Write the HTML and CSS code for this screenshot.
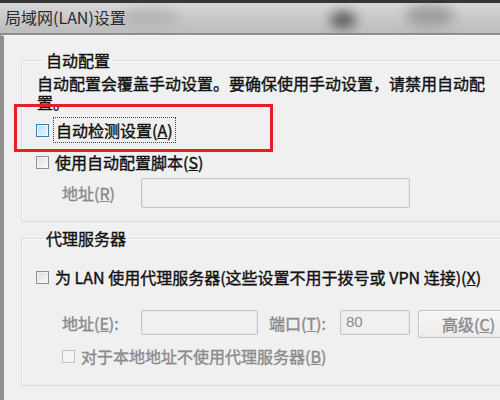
FILE: index.html
```html
<!DOCTYPE html>
<html lang="zh-CN">
<head>
  <meta charset="UTF-8" />
  <title>局域网(LAN)设置</title>
  <link rel="stylesheet" href="styles.css">
</head>
<body>

  <div class="window">
    <div class="titlebar">
      <span class="title">局域网(LAN)设置</span>
      <span class="smudge smudge-1"></span>
      <span class="smudge smudge-2"></span>
      <span class="smudge smudge-3"></span>
    </div>

    <div class="dialog">
      <!-- 自动配置 -->
      <fieldset class="group group-auto">
        <legend>自动配置</legend>
        <p class="desc">自动配置会覆盖手动设置。要确保使用手动设置，请禁用自动配置。</p>

        <div class="check-row row-detect">
          <span class="box box-hot"></span>
          <span class="label focused">自动检测设置(<u>A</u>)</span>
        </div>

        <div class="check-row row-script">
          <span class="box"></span>
          <span class="label">使用自动配置脚本(<u>S</u>)</span>
        </div>

        <div class="field-row row-script-addr">
          <span class="field-label muted">地址(<u>R</u>)</span>
          <span class="input input-wide"></span>
        </div>
      </fieldset>

      <!-- 代理服务器 -->
      <fieldset class="group group-proxy">
        <legend>代理服务器</legend>

        <div class="check-row row-proxy">
          <span class="box"></span>
          <span class="label">为 LAN 使用代理服务器(这些设置不用于拨号或 VPN 连接)(<u>X</u>)</span>
        </div>

        <div class="field-row row-proxy-addr">
          <span class="field-label muted">地址(<u>E</u>):</span>
          <span class="input input-addr"></span>
          <span class="port-label muted">端口(<u>T</u>):</span>
          <span class="input input-port">80</span>
          <span class="btn">高级(<u>C</u>)</span>
        </div>

        <div class="check-row row-bypass">
          <span class="box box-off"></span>
          <span class="label muted">对于本地地址不使用代理服务器(<u>B</u>)</span>
        </div>
      </fieldset>
    </div>

    <div class="highlight"></div>
  </div>

</body>
</html>
```

FILE: styles.css
```css
body {
  margin: 0;
  background-color: #f0f0f0;
  overflow: hidden;
  font-family: "Noto Sans CJK SC", "Liberation Sans", sans-serif;
  color: #111;
}

.window {
  position: relative;
  width: 500px;
  height: 400px;
  background-color: #f0f0f0;
  overflow: hidden;
}

.titlebar {
  position: relative;
  height: 30px;
  border-top: 3px solid #363636;
  border-bottom: 2px solid #8c8c8c;
  background: linear-gradient(to bottom, #d8d8d8, #c6c6c6 60%, #bdbdbd);
  overflow: hidden;
}

.title {
  position: relative;
  display: block;
  padding-left: 5px;
  line-height: 28px;
  font-size: 16px;
  color: #2a2a2a;
  z-index: 1;
}

.smudge {
  position: absolute;
  border-radius: 50%;
  filter: blur(6px);
}

.smudge-1 { left: 120px; top: 6px; width: 60px; height: 18px; background: #b4b4b4; }
.smudge-2 { left: 330px; top: 8px; width: 26px; height: 18px; background: #5e5e5e; }
.smudge-3 { left: 405px; top: 2px; width: 50px; height: 22px; background: #9e9e9e; }

.dialog {
  border-left: 4px solid #8f8f8f;
  border-top: 1px solid #fafafa;
  padding: 14px 0 0 17px;
  height: 360px;
  -webkit-text-stroke: 0.4px currentColor;
}

.group {
  box-sizing: border-box;
  margin: 0;
  padding: 0 0 0 14px;
  width: 479px;
  min-width: 0;
  border: 1px solid #d5dfe5;
  border-right: 0;
  border-radius: 3px 0 0 3px;
  box-shadow: inset 1px 1px 0 #fbfbfb;
}

.group legend {
  margin-left: 8px;
  padding: 0 2px;
  font-size: 16px;
  line-height: 20px;
}

.group-auto {
  padding-top: 4px;
  padding-bottom: 13px;
}

.group-proxy {
  margin-top: 6px;
  padding-top: 19px;
  padding-bottom: 19px;
}

.desc {
  margin: 0;
  padding-left: 1px;
  width: 462px;
  font-size: 16px;
  line-height: 19px;
}

.check-row {
  display: flex;
  align-items: center;
  height: 20px;
  font-size: 16px;
}

.row-detect { margin-top: 8px; }
.row-script { margin-top: 12px; }
.row-bypass { margin-top: 8px; padding-left: 26px; }

.box {
  width: 11px;
  height: 11px;
  border: 1px solid #8e8f8f;
  background: linear-gradient(135deg, #dcdcdc, #fbfbfb);
  box-shadow: inset 0 0 0 1px #f4f4f4;
  flex-shrink: 0;
}

.box-hot {
  border-color: #3c7fb1;
  background: linear-gradient(135deg, #b9dcf7, #eaf6fd);
}

.box-off {
  border-color: #c2c2c2;
  background: #f4f4f4;
}

.label {
  margin-left: 6px;
  white-space: nowrap;
}

.focused {
  margin-left: 4px;
  padding: 0 2px;
  border: 1px dotted #444;
}

.muted {
  color: #8b8b8b;
}

.field-row {
  display: flex;
  align-items: center;
  padding-left: 26px;
  font-size: 16px;
  white-space: nowrap;
}

.row-script-addr { margin-top: 6px; }
.row-proxy-addr { margin-top: 20px; }

.field-label {
  width: 79px;
  flex-shrink: 0;
}

.port-label {
  margin-left: 11px;
  width: 71px;
  flex-shrink: 0;
}

.input {
  box-sizing: border-box;
  height: 25px;
  border: 1px solid #c6c6c6;
  border-radius: 2px;
  background-color: #f0f0f0;
  box-shadow: inset 0 0 0 1px #e8e8e8;
  flex-shrink: 0;
}

.input-wide {
  width: 269px;
  height: 30px;
}

.input-addr { width: 117px; }

.input-port {
  width: 70px;
  padding-left: 5px;
  font-family: "Liberation Sans", sans-serif;
  font-size: 15px;
  line-height: 22px;
  color: #8b8b8b;
  -webkit-text-stroke: 0;
}

.btn {
  box-sizing: border-box;
  margin-left: 8px;
  margin-top: 3px;
  padding-left: 23px;
  width: 82px;
  height: 28px;
  border: 1px solid #c2c2c2;
  border-right: 0;
  border-radius: 3px 0 0 3px;
  background: linear-gradient(to bottom, #f6f6f6, #ececec);
  box-shadow: inset 1px 1px 0 #fafafa;
  line-height: 26px;
  color: #8b8b8b;
  flex-shrink: 0;
  overflow: hidden;
}

.highlight {
  position: absolute;
  left: 14px;
  top: 104px;
  width: 253px;
  height: 42px;
  border: 3px solid #ed1c24;
}
```
